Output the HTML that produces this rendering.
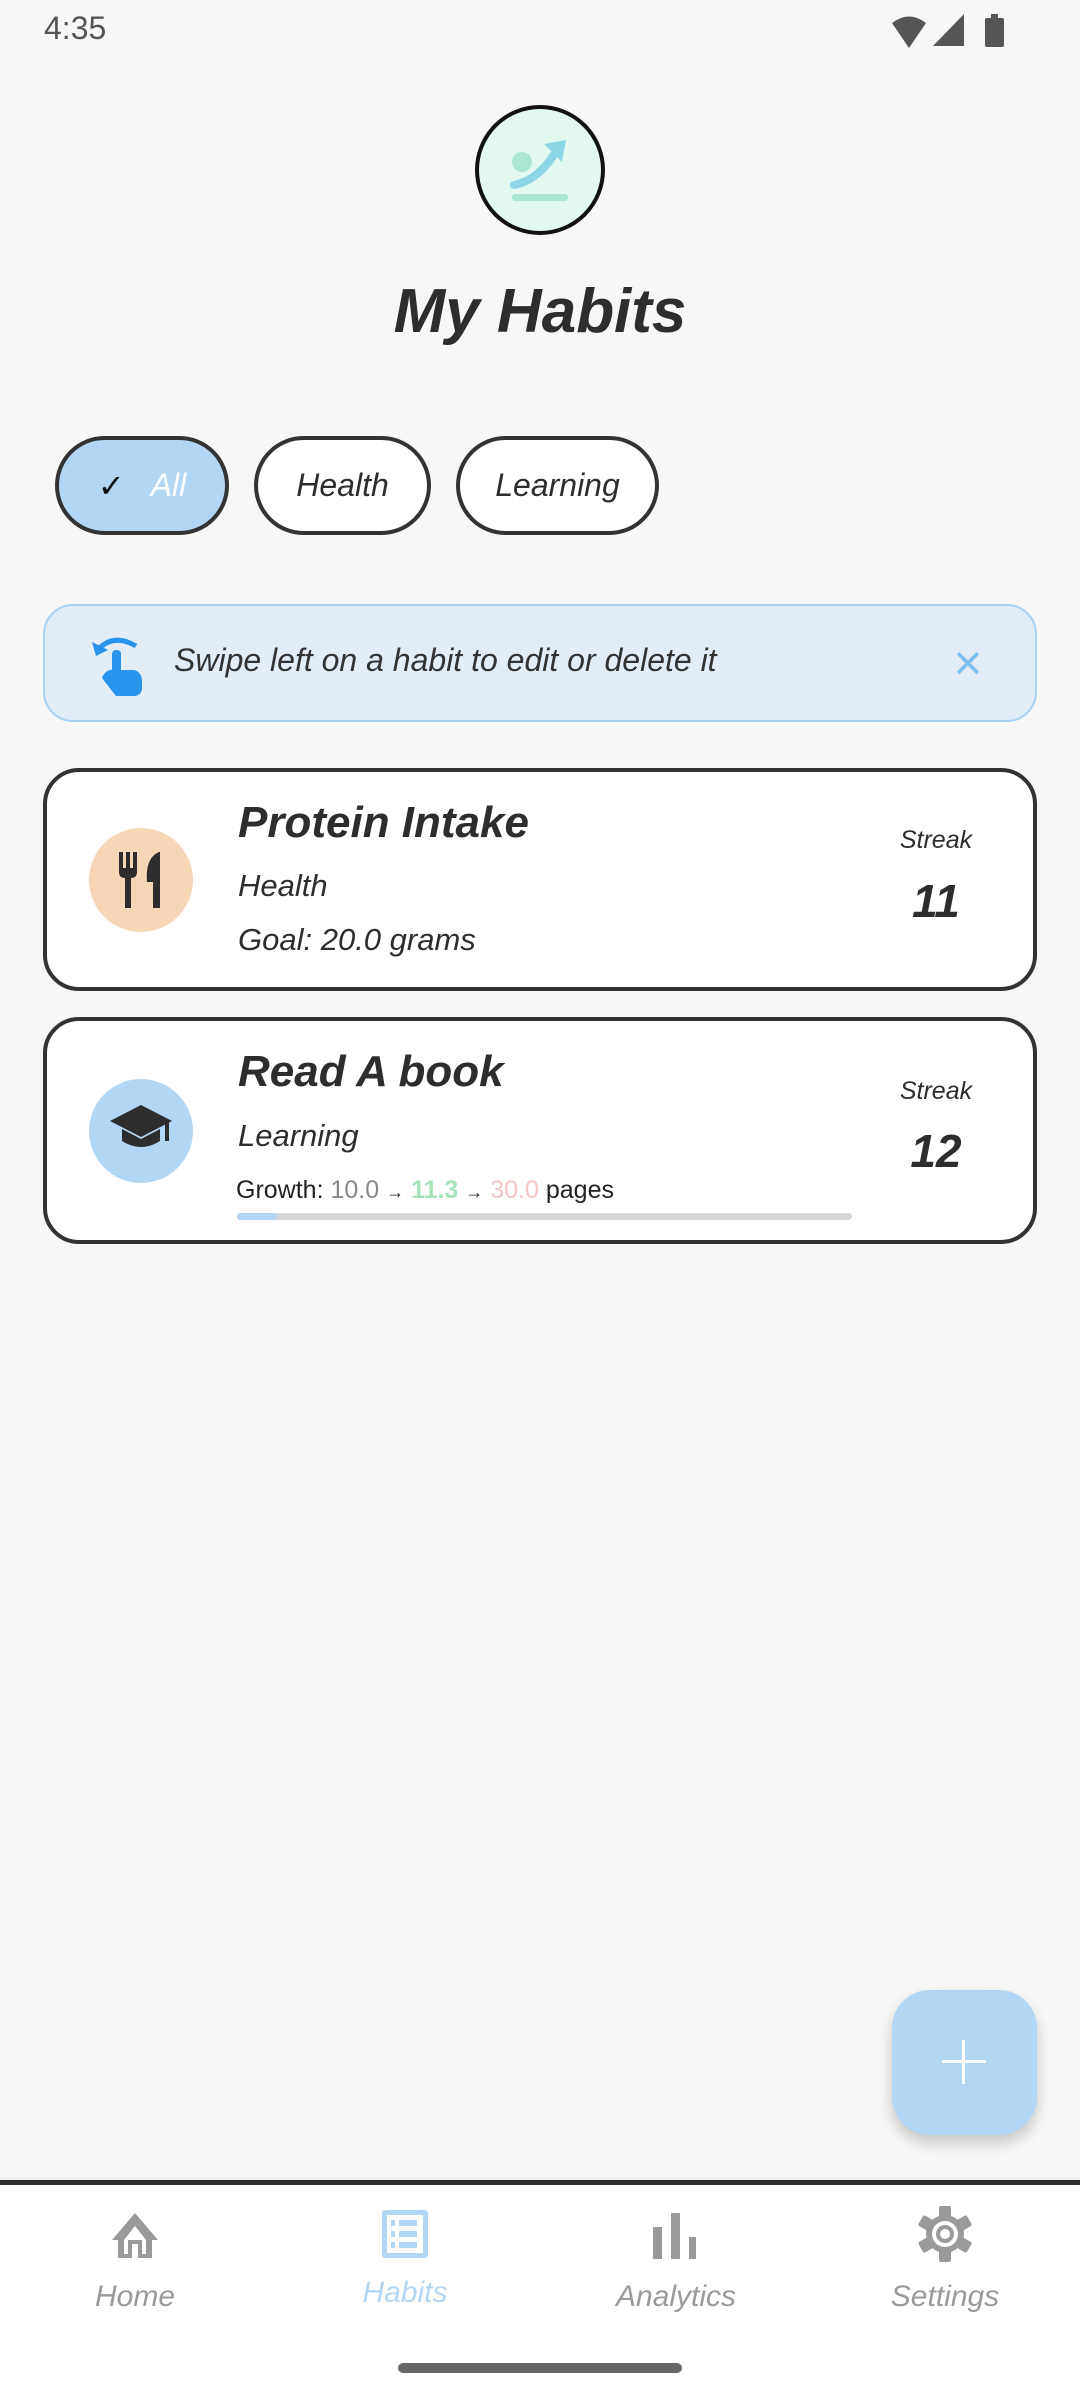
<!DOCTYPE html>
<html><head><meta charset="utf-8"><style>
*{margin:0;padding:0;box-sizing:border-box}
body{width:1080px;height:2400px;background:#f7f7f5;position:relative;overflow:hidden;font-family:"Liberation Sans",sans-serif;color:#2d2d2d}
.a{position:absolute}
.hand{font-family:"Liberation Sans Narrow","Liberation Sans",sans-serif;font-style:italic}
.chip{position:absolute;top:436px;height:99px;border:4px solid #333;border-radius:50px;background:#fff;display:flex;align-items:center;justify-content:center;font-size:32px}
.card{position:absolute;left:43px;width:994px;border:4px solid #333;border-radius:36px;background:#fff}
.nav{position:absolute;top:2280px;width:200px;text-align:center;font-size:30px;color:#9a9a9a}
</style></head><body>
<div class="a" style="left:44px;top:10px;font-size:32px;color:#555">4:35</div>
<svg class="a" style="left:888px;top:14px" width="120" height="34" viewBox="0 0 120 34">
<path d="M4 9 Q21 -4 38 9 L21 34 Z" fill="#555"/>
<path d="M76 0 L76 32 L45 32 Z" fill="#555"/>
<rect x="97" y="4" width="19" height="29" rx="2" fill="#555"/><rect x="103" y="0" width="7" height="5" fill="#555"/>
</svg>
<!-- logo -->
<div class="a" style="left:475px;top:105px;width:130px;height:130px;border:4px solid #111;border-radius:50%;background:#e3f9ef"></div>
<svg class="a" style="left:500px;top:130px" width="80" height="80" viewBox="0 0 80 80">
<circle cx="22" cy="32" r="10" fill="#a9e6d3"/>
<path d="M14 55 Q40 50 58 18" stroke="#8dd6e6" stroke-width="8" fill="none" stroke-linecap="round"/>
<path d="M44 14 L66 10 L62 32 Z" fill="#8dd6e6"/>
<rect x="12" y="64" width="56" height="7" rx="3" fill="#a9e6d3"/>
</svg>
<div class="a hand" style="left:0;width:1080px;top:276px;text-align:center;font-size:62px;font-weight:bold;color:#2d2d2d">My Habits</div>
<!-- chips -->
<div class="chip hand" style="left:55px;width:174px;background:#b3d6f4"><span style="font-style:normal;font-size:32px;color:#111;margin-right:26px">✓</span><span style="color:#fff">All</span></div>
<div class="chip hand" style="left:254px;width:177px">Health</div>
<div class="chip hand" style="left:456px;width:203px">Learning</div>
<!-- banner -->
<div class="a" style="left:43px;top:604px;width:994px;height:118px;border:2px solid #a9d3f5;border-radius:30px;background:#e3edf7"></div>
<svg class="a" style="left:90px;top:632px" width="56" height="64" viewBox="0 0 56 64">
<path d="M6 20 Q22 0 46 14" stroke="#2a93ec" stroke-width="5" fill="none"/>
<path d="M2 10 L6 24 L18 18 Z" fill="#2a93ec"/>
<rect x="22" y="18" width="9" height="30" rx="4" fill="#2a93ec"/>
<path d="M12 46 Q16 36 26 38 L44 38 Q52 40 52 50 L52 58 Q50 64 44 64 L26 64 Z" fill="#2a93ec"/>
</svg>
<div class="a hand" style="left:174px;top:642px;font-size:32px;color:#333">Swipe left on a habit to edit or delete it</div>
<div class="a" style="left:952px;top:642px;font-size:38px;color:#7fbff0">✕</div>
<!-- card1 -->
<div class="card" style="top:768px;height:223px"></div>
<div class="a" style="left:89px;top:828px;width:104px;height:104px;border-radius:50%;background:#f5d6b6"></div>
<svg class="a" style="left:115px;top:852px" width="52" height="56" viewBox="0 0 52 56">
<path d="M4 0 V20 Q4 26 10 26 V56 H16 V26 Q22 26 22 20 V0 H18 V16 H15 V0 H11 V16 H8 V0 Z" fill="#2d2d2d"/>
<path d="M44 0 Q30 6 32 30 H38 V56 H45 V0 Z" fill="#2d2d2d"/>
</svg>
<div class="a hand" style="left:238px;top:798px;font-size:44px;font-weight:bold">Protein Intake</div>
<div class="a hand" style="left:238px;top:868px;font-size:31px">Health</div>
<div class="a hand" style="left:238px;top:922px;font-size:31px">Goal: 20.0 grams</div>
<div class="a hand" style="left:880px;width:112px;text-align:center;top:826px;font-size:25px">Streak</div>
<div class="a hand" style="left:880px;width:112px;text-align:center;top:874px;font-size:46px;font-weight:bold">11</div>
<!-- card2 -->
<div class="card" style="top:1017px;height:227px"></div>
<div class="a" style="left:89px;top:1079px;width:104px;height:104px;border-radius:50%;background:#b3d6f4"></div>
<svg class="a" style="left:110px;top:1105px" width="62" height="50" viewBox="0 0 62 50">
<path d="M31 0 L62 16 L31 32 L0 16 Z" fill="#2d2d2d"/>
<path d="M12 24 V36 Q31 48 50 36 V24 L31 34 Z" fill="#2d2d2d"/>
<rect x="55" y="16" width="4" height="20" fill="#2d2d2d"/>
</svg>
<div class="a hand" style="left:238px;top:1047px;font-size:44px;font-weight:bold">Read A book</div>
<div class="a hand" style="left:238px;top:1118px;font-size:31px">Learning</div>
<div class="a" style="left:236px;top:1176px;font-size:25px;color:#222">Growth: <span style="color:#888">10.0</span> <span style="font-size:18px">→</span> <span style="color:#a8e2b8;font-weight:bold">11.3</span> <span style="font-size:18px">→</span> <span style="color:#f5c5c5">30.0</span> pages</div>
<div class="a" style="left:237px;top:1213px;width:615px;height:7px;border-radius:4px;background:#d6d6d6"></div>
<div class="a" style="left:237px;top:1213px;width:40px;height:7px;border-radius:4px;background:#b3d6f4"></div>
<div class="a hand" style="left:880px;width:112px;text-align:center;top:1077px;font-size:25px">Streak</div>
<div class="a hand" style="left:880px;width:112px;text-align:center;top:1124px;font-size:46px;font-weight:bold">12</div>
<!-- FAB -->
<div class="a" style="left:892px;top:1990px;width:145px;height:145px;border-radius:38px;background:#b3d6f4;box-shadow:0 8px 14px rgba(0,0,0,0.2)"></div>
<div class="a" style="left:942px;top:2060px;width:44px;height:3px;background:#fff"></div>
<div class="a" style="left:962px;top:2040px;width:3px;height:44px;background:#fff"></div>
<!-- nav -->
<div class="a" style="left:0;top:2176px;width:1080px;height:10px;background:linear-gradient(rgba(0,0,0,0),rgba(0,0,0,0.1))"></div>
<div class="a" style="left:0;top:2180px;width:1080px;height:220px;background:#fff;border-top:5px solid #2d2d2d"></div>
<svg class="a" style="left:108px;top:2210px" width="54" height="50" viewBox="0 0 54 50">
<path d="M27 3 L4 30 H10 V48 H24 V34 H30 V48 H44 V30 H50 Z M16 30 L27 16 L38 30 V44 H34 V30 H20 V44 H16 Z" fill="#9a9a9a" fill-rule="evenodd"/>
</svg>
<svg class="a" style="left:381px;top:2210px" width="48" height="50" viewBox="0 0 48 50">
<rect x="1" y="0" width="46" height="48" rx="3" fill="#b3d6f4"/>
<rect x="6" y="5" width="36" height="38" fill="#fff"/>
<rect x="10" y="10" width="4" height="6" fill="#b3d6f4"/><rect x="18" y="10" width="18" height="6" fill="#b3d6f4"/>
<rect x="10" y="21" width="4" height="6" fill="#b3d6f4"/><rect x="18" y="21" width="18" height="6" fill="#b3d6f4"/>
<rect x="10" y="32" width="4" height="6" fill="#b3d6f4"/><rect x="18" y="32" width="18" height="6" fill="#b3d6f4"/>
</svg>
<svg class="a" style="left:653px;top:2213px" width="44" height="46" viewBox="0 0 44 46">
<rect x="0" y="14" width="9" height="32" fill="#9a9a9a"/><rect x="18" y="0" width="9" height="46" fill="#9a9a9a"/><rect x="36" y="24" width="7" height="22" fill="#9a9a9a"/>
</svg>
<svg class="a" style="left:918px;top:2205px" width="54" height="58" viewBox="-27 -29 54 58">
<g fill="#9a9a9a">
<circle r="19"/>
<rect x="-6" y="-28" width="12" height="56" rx="2"/>
<rect x="-6" y="-28" width="12" height="56" rx="2" transform="rotate(60)"/>
<rect x="-6" y="-28" width="12" height="56" rx="2" transform="rotate(120)"/>
</g>
<circle r="13" fill="#fff"/><circle r="9" fill="#9a9a9a"/><circle r="5" fill="#fff"/>
</svg>
<div class="nav hand" style="left:35px">Home</div>
<div class="nav hand" style="left:305px;color:#b3d6f4;top:2276px">Habits</div>
<div class="nav hand" style="left:576px">Analytics</div>
<div class="nav hand" style="left:845px">Settings</div>
<div class="a" style="left:398px;top:2363px;width:284px;height:10px;border-radius:5px;background:#666"></div>
</body></html>
